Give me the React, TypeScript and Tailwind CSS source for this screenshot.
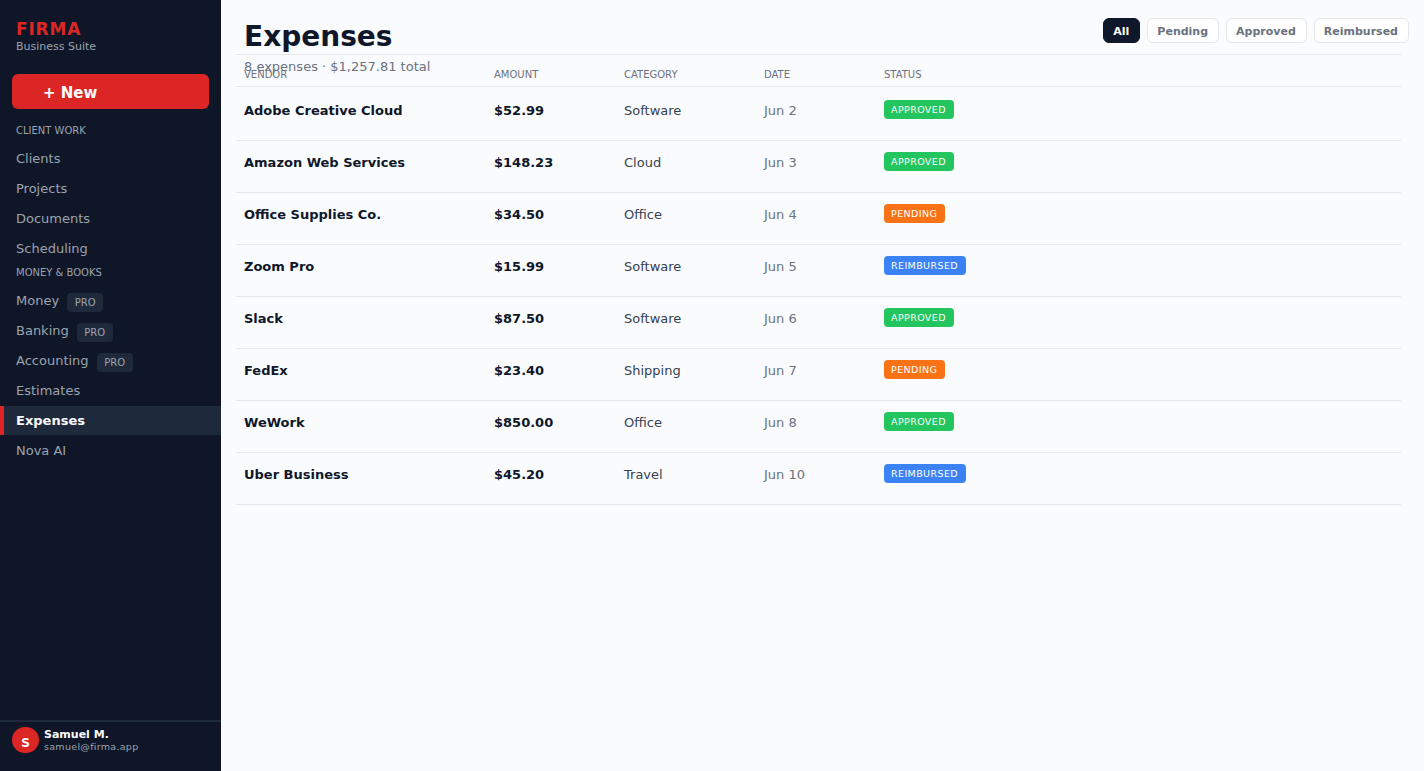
const clientLinks = ["Clients", "Projects", "Documents", "Scheduling"];
const moneyLinks = [
  { name: "Money", pro: true },
  { name: "Banking", pro: true },
  { name: "Accounting", pro: true },
  { name: "Estimates" },
  { name: "Expenses", active: true },
  { name: "Nova AI" },
];

const filters = ["All", "Pending", "Approved", "Reimbursed"];

const statusColors: Record<string, string> = {
  APPROVED: "bg-[#22c55e]",
  PENDING: "bg-[#f97316]",
  REIMBURSED: "bg-[#3b82f6]",
};

const expenses = [
  { vendor: "Adobe Creative Cloud", amount: "$52.99", category: "Software", date: "Jun 2", status: "APPROVED" },
  { vendor: "Amazon Web Services", amount: "$148.23", category: "Cloud", date: "Jun 3", status: "APPROVED" },
  { vendor: "Office Supplies Co.", amount: "$34.50", category: "Office", date: "Jun 4", status: "PENDING" },
  { vendor: "Zoom Pro", amount: "$15.99", category: "Software", date: "Jun 5", status: "REIMBURSED" },
  { vendor: "Slack", amount: "$87.50", category: "Software", date: "Jun 6", status: "APPROVED" },
  { vendor: "FedEx", amount: "$23.40", category: "Shipping", date: "Jun 7", status: "PENDING" },
  { vendor: "WeWork", amount: "$850.00", category: "Office", date: "Jun 8", status: "APPROVED" },
  { vendor: "Uber Business", amount: "$45.20", category: "Travel", date: "Jun 10", status: "REIMBURSED" },
];

const NavLink = ({ name, pro, active }: { name: string; pro?: boolean; active?: boolean }) => (
  <div
    className={`mb-px flex h-[29px] items-center border-l-4 pl-3 text-[13px] ${
      active ? "border-[#dc2626] bg-[#1e293b] font-bold text-[#f8fafc]" : "border-transparent text-[#9ca3af]"
    }`}
  >
    <span>{name}</span>
    {pro && (
      <span className="ml-2 mt-[3px] flex h-[19px] w-[36px] items-center justify-center rounded-[4px] bg-[#1e293b] text-[10px] text-[#9ca3af]">
        PRO
      </span>
    )}
  </div>
);

export default function App() {
  return (
    <div className="flex h-[771px] w-[1424px] overflow-hidden bg-[#fafbfd] font-['DejaVu_Sans',sans-serif]">
      {/* SIDEBAR */}
      <aside className="flex w-[221px] shrink-0 flex-col bg-[#0f1627]">
        <div className="px-4 pt-[19px]">
          <div className="text-[17px] font-bold leading-[21px] tracking-[0.8px] text-[#dc2626]">FIRMA</div>
          <div className="text-[11px] leading-[14px] text-[#9ca3af]">Business Suite</div>
        </div>

        <div className="px-3 pt-[20px]">
          <div className="flex h-[35px] w-[197px] items-center rounded-[6px] bg-[#dc2626] pl-[31px] pt-[3px] text-[15px] font-bold text-white">
            + New
          </div>
        </div>

        <div className="pl-4 pt-[15px] text-[10px] leading-[14px] text-[#9ca3af]">CLIENT WORK</div>
        <div className="pt-[6px]">
          {clientLinks.map((name) => (
            <NavLink key={name} name={name} />
          ))}
        </div>
        <div className="pl-4 pt-[2px] text-[10px] leading-[14px] text-[#9ca3af]">MONEY &amp; BOOKS</div>
        <div className="pt-[6px]">
          {moneyLinks.map((link) => (
            <NavLink key={link.name} {...link} />
          ))}
        </div>

        <div className="mt-auto flex h-[51px] items-start gap-[5px] border-t-2 border-[#1e293b] pl-3 pt-[5px]">
          <div className="flex h-[26px] w-[27px] items-center justify-center rounded-full bg-[#dc2626] pt-[5px] text-[12px] font-bold text-white">
            S
          </div>
          <div className="pt-px">
            <div className="text-[11px] font-bold leading-[13px] text-[#f8fafc]">Samuel M.</div>
            <div className="text-[9.5px] leading-[12px] tracking-[0.3px] text-[#9ca3af]">samuel@firma.app</div>
          </div>
        </div>
      </aside>

      {/* MAIN */}
      <main className="min-w-0 flex-1">
        <header className="flex h-[54px] items-start justify-between pl-[23px] pr-[15px]">
          <div>
            <h1 className="pt-[20px] text-[28px] font-bold leading-[34px] text-[#0f172a]">Expenses</h1>
            <p className="pt-[4px] text-[13px] leading-[18px] text-[#6b7280]">8 expenses · $1,257.81 total</p>
          </div>
          <div className="flex gap-[7px] pt-[18px]">
            {filters.map((filter, i) => (
              <div
                key={filter}
                className={`flex h-[25px] items-center rounded-[6px] border pl-[9px] pr-[10px] pt-[3px] text-[11px] font-bold ${
                  i === 0
                    ? "border-[#0f172a] bg-[#0f172a] text-white"
                    : "border-[#e5e7eb] bg-white text-[#6b7280]"
                }`}
              >
                {filter}
              </div>
            ))}
          </div>
        </header>

        <div className="mr-[23px] ml-[15px] border-t border-[#e5e7eb]">
          <div className="grid h-[32px] grid-cols-[250px_130px_140px_120px_1fr] items-center border-b border-[#e5e7eb] pl-2 pt-[8px] text-[10px] text-[#6b7280]">
            <span>VENDOR</span>
            <span>AMOUNT</span>
            <span>CATEGORY</span>
            <span>DATE</span>
            <span>STATUS</span>
          </div>
          {expenses.map((row, i) => (
            <div
              key={row.vendor}
              className={`grid grid-cols-[250px_130px_140px_120px_1fr] border-b border-[#e5e7eb] pl-2 text-[13px] ${
                i === 0 ? "h-[54px] pt-[15px]" : "h-[52px] pt-[13px]"
              }`}
            >
              <span className="font-bold leading-[18px] text-[#0f172a]">{row.vendor}</span>
              <span className="font-bold leading-[18px] text-[#0f172a]">{row.amount}</span>
              <span className="leading-[18px] text-[#374151]">{row.category}</span>
              <span className="leading-[18px] text-[#6b7280]">{row.date}</span>
              <div className="flex items-start">
                <span
                  className={`-mt-[2px] flex h-[19px] items-center rounded-[4px] pl-[7px] pr-[8px] pt-px text-[9.5px] tracking-[0.4px] text-white ${statusColors[row.status]}`}
                >
                  {row.status}
                </span>
              </div>
            </div>
          ))}
        </div>
      </main>
    </div>
  );
}
